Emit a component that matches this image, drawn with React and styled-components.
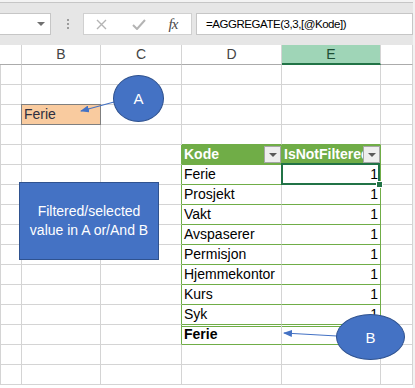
import React from "react";
import styled, { createGlobalStyle, css } from "styled-components";

const GRID = "#d4d4d4";
const GREEN = "#70ad47";
const DARK_GREEN = "#217346";
const ORANGE = "#f9cb9f";
const BLUE = "#4472c4";
const BLUE_EDGE = "#2f528f";

const codes = ["Ferie", "Prosjekt", "Vakt", "Avspaserer", "Permisjon", "Hjemmekontor", "Kurs", "Syk"];

const GlobalStyle = createGlobalStyle`
  html, body {
    margin: 0;
    padding: 0;
    background: #fff;
  }
  body {
    font-family: "Liberation Sans", Arial, sans-serif;
  }
`;

const Window = styled.div`
  position: relative;
  width: 415px;
  height: 388px;
  overflow: hidden;
  box-sizing: border-box;
  background: #fff;
  border-right: 2px solid #f2f2f2;
`;

const TopEdge = styled.div`
  height: 2px;
  background: #f3f3f3;
`;

const Toolbar = styled.div`
  height: 43px;
  box-sizing: border-box;
  border-top: 1px solid #c6c6c6;
  background: #e6e6e6;
  display: flex;
  align-items: center;
`;

const NameBox = styled.div`
  width: 52px;
  height: 22px;
  margin-left: -1px;
  box-sizing: border-box;
  background: #fff;
  border: 1px solid #c6c6c6;
  display: flex;
  align-items: center;
  justify-content: flex-end;
  padding-right: 5px;
`;

const Caret = styled.span`
  width: 0;
  height: 0;
  border-left: 4px solid transparent;
  border-right: 4px solid transparent;
  border-top: 4px solid #707070;
`;

const Grip = styled.div`
  margin-left: 16px;
  display: flex;
  flex-direction: column;
  gap: 2px;
`;

const Dot = styled.span`
  width: 2px;
  height: 2px;
  background: #9c9c9c;
`;

const IconBox = styled.div`
  margin-left: 14px;
  width: 109px;
  height: 22px;
  box-sizing: border-box;
  background: #fff;
  border: 1px solid #d0d0d0;
  display: grid;
  grid-template-columns: 34px 42px 26px;
  align-items: center;
  justify-items: center;
`;

const Fx = styled.span`
  font-family: "Liberation Serif", "Times New Roman", serif;
  font-style: italic;
  font-size: 15px;
  color: #4a4a4a;
  letter-spacing: -1px;
`;

const FormulaBox = styled.div`
  margin-left: 4px;
  flex: 1;
  height: 22px;
  box-sizing: border-box;
  background: #fff;
  border: 1px solid #c6c6c6;
  padding-left: 9px;
  font-size: 11.5px;
  letter-spacing: -0.45px;
  line-height: 20px;
  color: #000;
`;

const HeaderRow = styled.div`
  display: grid;
  grid-template-columns: 22px 79px 81px 100px 99px 32px;
  background: #fff;
`;

const ColHead = styled.div`
  height: 20px;
  box-sizing: border-box;
  border-right: 1px solid ${GRID};
  border-bottom: 1px solid #ababab;
  background: #fff;
  color: #444;
  text-align: center;
  font-size: 14px;
  line-height: 19px;
  ${(p) =>
    p.$active &&
    css`
      background: #9fd5b7;
      color: #1d4e34;
      border-bottom: 2px solid ${DARK_GREEN};
    `}
`;

const Sheet = styled.div`
  border-left: 1px solid ${GRID};
`;

const Row = styled.div`
  display: grid;
  grid-template-columns: 21px 79px 81px 100px 99px 32px;
`;

const Cell = styled.div`
  position: relative;
  height: 20px;
  box-sizing: border-box;
  padding: 0 2px;
  border-right: 1px solid ${(p) => p.$edge || GRID};
  border-bottom: 1px solid ${(p) => p.$under || GRID};
  background: ${(p) => p.$bg || "transparent"};
  color: ${(p) => p.$color || "#000"};
  font-weight: ${(p) => (p.$bold ? 700 : 400)};
  text-align: ${(p) => (p.$num ? "right" : "left")};
  font-size: 14px;
  line-height: 19px;
  white-space: nowrap;
  ${(p) =>
    p.$total &&
    css`
      box-shadow: inset 0 1px 0 #fff, inset 0 2px 0 ${GREEN};
    `}
  ${(p) =>
    p.$framed &&
    css`
      z-index: 1;
      color: #2f2f3f;
      &::after {
        content: "";
        position: absolute;
        left: -1px;
        top: -1px;
        right: -1px;
        bottom: -1px;
        border: 1px solid #7f7f7f;
      }
    `}
  ${(p) =>
    p.$active &&
    css`
      z-index: 2;
      &::before {
        content: "";
        position: absolute;
        left: -1px;
        top: -2px;
        right: 0;
        bottom: -1px;
        border: 2px solid ${DARK_GREEN};
      }
      &::after {
        content: "";
        position: absolute;
        right: -3px;
        bottom: -4px;
        width: 5px;
        height: 5px;
        background: ${DARK_GREEN};
        border: 1px solid #fff;
      }
    `}
`;

const FilterButton = styled.span`
  position: absolute;
  right: 0;
  top: 1px;
  width: 17px;
  height: 17px;
  box-sizing: border-box;
  background: #eeeeee;
  border: 1px solid #a6a6a6;
  &::after {
    content: "";
    position: absolute;
    left: 4px;
    top: 6px;
    border-left: 4px solid transparent;
    border-right: 4px solid transparent;
    border-top: 4px solid #5a5a5a;
  }
`;

const Arrows = styled.svg`
  position: absolute;
  left: 0;
  top: 0;
  z-index: 3;
  pointer-events: none;
`;

const Bubble = styled.div`
  position: absolute;
  z-index: 4;
  left: ${(p) => p.$x}px;
  top: ${(p) => p.$y}px;
  width: ${(p) => p.$w}px;
  height: ${(p) => p.$h}px;
  box-sizing: border-box;
  border-radius: 50%;
  background: ${BLUE};
  border: 1px solid ${BLUE_EDGE};
  color: #fff;
  display: flex;
  align-items: center;
  justify-content: center;
  font-size: 15px;
`;

const NoteBox = styled.div`
  position: absolute;
  z-index: 4;
  left: 19px;
  top: 182px;
  width: 140px;
  height: 78px;
  box-sizing: border-box;
  background: ${BLUE};
  border: 1px solid ${BLUE_EDGE};
  color: #fff;
  display: flex;
  align-items: center;
  justify-content: center;
  text-align: center;
  font-size: 14px;
  line-height: 19px;
`;

const Blank = () => (
  <Row>
    {[0, 1, 2, 3, 4, 5].map((i) => (
      <Cell key={i} />
    ))}
  </Row>
);

const App = () => (
  <Window>
    <GlobalStyle />
    <TopEdge />
    <Toolbar>
      <NameBox>
        <Caret />
      </NameBox>
      <Grip>
        <Dot />
        <Dot />
        <Dot />
      </Grip>
      <IconBox>
        <svg width="11" height="11" viewBox="0 0 11 11">
          <path d="M1 1 L10 10 M10 1 L1 10" stroke="#b4b4b4" strokeWidth="1.4" fill="none" />
        </svg>
        <svg width="14" height="11" viewBox="0 0 14 11">
          <path d="M1 6 L5 10 L13 1" stroke="#b4b4b4" strokeWidth="2" fill="none" />
        </svg>
        <Fx>fx</Fx>
      </IconBox>
      <FormulaBox>=AGGREGATE(3,3,[@Kode])</FormulaBox>
    </Toolbar>

    <HeaderRow>
      <ColHead />
      <ColHead>B</ColHead>
      <ColHead>C</ColHead>
      <ColHead>D</ColHead>
      <ColHead $active>E</ColHead>
      <ColHead />
    </HeaderRow>

    <Sheet>
      <Blank />
      <Blank />
      <Row>
        <Cell />
        <Cell $bg={ORANGE} $framed>
          Ferie
        </Cell>
        <Cell />
        <Cell />
        <Cell />
        <Cell />
      </Row>
      <Row>
        <Cell />
        <Cell />
        <Cell />
        <Cell $under={GREEN} />
        <Cell $under={GREEN} />
        <Cell />
      </Row>
      <Row>
        <Cell />
        <Cell />
        <Cell $edge={GREEN} />
        <Cell $bg={GREEN} $edge={GREEN} $under={GREEN} $color="#fff" $bold>
          Kode
          <FilterButton />
        </Cell>
        <Cell $bg={GREEN} $edge={GREEN} $under={GREEN} $color="#fff" $bold>
          IsNotFiltered
          <FilterButton />
        </Cell>
        <Cell />
      </Row>
      {codes.map((code, i) => (
        <Row key={code}>
          <Cell />
          <Cell />
          <Cell $edge={GREEN} />
          <Cell $under={GREEN}>{code}</Cell>
          <Cell $edge={GREEN} $under={GREEN} $num $active={i === 0}>
            1
          </Cell>
          <Cell />
        </Row>
      ))}
      <Row>
        <Cell />
        <Cell />
        <Cell $edge={GREEN} />
        <Cell $under={GREEN} $total $bold>
          Ferie
        </Cell>
        <Cell $edge={GREEN} $under={GREEN} $total />
        <Cell />
      </Row>
      <Blank />
      <Blank />
    </Sheet>

    <Arrows width="415" height="388" viewBox="0 0 415 388">
      <defs>
        <marker
          id="head"
          markerWidth="9"
          markerHeight="7"
          refX="8"
          refY="3.5"
          orient="auto"
          markerUnits="userSpaceOnUse"
        >
          <path d="M0 0 L9 3.5 L0 7 Z" fill={BLUE} />
        </marker>
      </defs>
      <line x1="114" y1="102" x2="81" y2="111" stroke={BLUE} strokeWidth="1.2" markerEnd="url(#head)" />
      <line x1="337" y1="336" x2="284" y2="333" stroke={BLUE} strokeWidth="1.2" markerEnd="url(#head)" />
    </Arrows>

    <Bubble $x={113} $y={75} $w={51} $h={47}>
      A
    </Bubble>
    <Bubble $x={336} $y={314} $w={69} $h={46}>
      B
    </Bubble>
    <NoteBox>
      Filtered/selected
      <br />
      value in A or/And B
    </NoteBox>
  </Window>
);

export default App;
